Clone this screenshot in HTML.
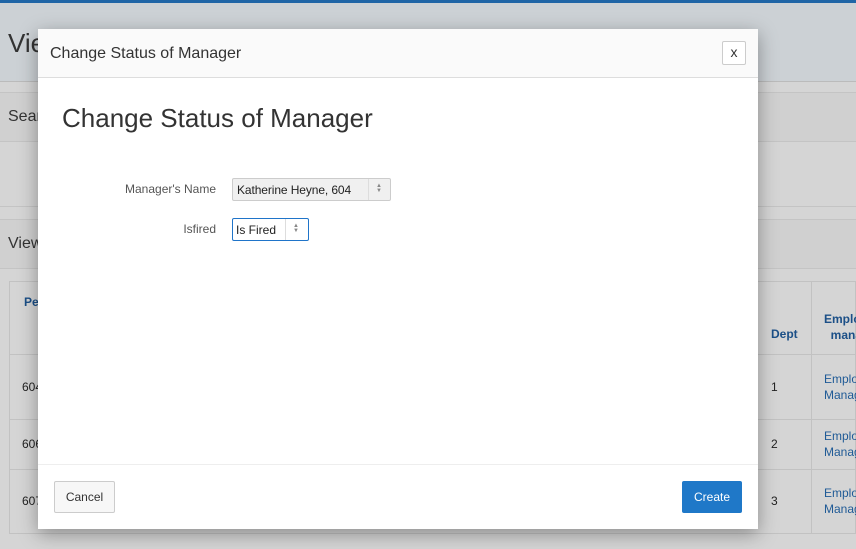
<!DOCTYPE html>
<html><head><style>
*{box-sizing:border-box;margin:0;padding:0}
body{width:856px;height:549px;overflow:hidden;position:relative;background:#d5d5d5;font-family:"Liberation Sans",sans-serif;}
.abs{position:absolute}
.t{color:#1b4f87;font-weight:bold;font-size:12px}
.c{font-size:12px;color:#222}
.l{font-size:12px;color:#1f5a96;line-height:16px}
</style></head><body>
<div class="abs" style="left:0;top:0;width:856px;height:3px;background:#1f65a6"></div>
<div class="abs" style="left:0;top:3px;width:856px;height:79px;background:#ccd1d5;border-bottom:1px solid #bbb"></div>
<div class="abs" style="left:8px;top:28px;font-size:26px;color:#333">View</div>
<div class="abs" style="left:0;top:92px;width:856px;height:50px;background:#d0d0d0;border-top:1px solid #c4c4c4;border-bottom:1px solid #c4c4c4"></div>
<div class="abs" style="left:8px;top:108px;font-size:16px;color:#333">Search</div>
<div class="abs" style="left:0;top:206px;width:856px;height:1px;background:#c4c4c4"></div>
<div class="abs" style="left:0;top:219px;width:856px;height:50px;background:#d0d0d0;border-top:1px solid #c4c4c4;border-bottom:1px solid #c4c4c4"></div>
<div class="abs" style="left:8px;top:235px;font-size:16px;color:#333">View</div>
<div class="abs" style="left:9px;top:281px;width:847px;height:253px;border:1px solid #c2c2c2;background:#d5d5d5"></div>
<div class="abs" style="left:9px;top:354px;width:847px;height:1px;background:#c2c2c2"></div>
<div class="abs" style="left:9px;top:419px;width:847px;height:1px;background:#c2c2c2"></div>
<div class="abs" style="left:9px;top:469px;width:847px;height:1px;background:#c2c2c2"></div>
<div class="abs" style="left:811px;top:281px;width:1px;height:253px;background:#c2c2c2"></div>
<div class="abs t" style="left:24px;top:295px">Person</div>
<div class="abs c" style="left:22px;top:380px">604</div>
<div class="abs c" style="left:22px;top:437px">606</div>
<div class="abs c" style="left:22px;top:494px">607</div>
<div class="abs t" style="left:771px;top:327px">Dept</div>
<div class="abs t" style="left:824px;top:311px;line-height:16px">Employee<br>&nbsp;&nbsp;manager</div>
<div class="abs c" style="left:771px;top:380px">1</div>
<div class="abs c" style="left:771px;top:437px">2</div>
<div class="abs c" style="left:771px;top:494px">3</div>
<div class="abs l" style="left:824px;top:371px">Employee<br>Manager</div>
<div class="abs l" style="left:824px;top:428px">Employee<br>Manager</div>
<div class="abs l" style="left:824px;top:485px">Employee<br>Manager</div>

<div class="abs" style="left:38px;top:29px;width:720px;height:500px;background:#fff;box-shadow:0 5px 18px rgba(0,0,0,.35)">
 <div style="height:49px;background:#fafafa;border-bottom:1px solid #ddd;position:relative">
  <div class="abs" style="left:12px;top:16px;font-size:16px;color:#333">Change Status of Manager</div>
  <div class="abs" style="left:684px;top:12px;width:24px;height:24px;border:1px solid #ccc;background:#fff;border-radius:2px;text-align:center;line-height:21px;font-size:14px;color:#333">x</div>
 </div>
 <div class="abs" style="left:24px;top:74px;font-size:26px;color:#333">Change Status of Manager</div>
 <div class="abs" style="left:0;top:153px;width:178px;text-align:right;font-size:12px;color:#555">Manager's Name</div>
 <div class="abs" style="left:194px;top:149px;width:159px;height:23px;background:#f0f0f0;border:1px solid #ccc;border-radius:2px;font-size:12px;color:#222;padding:4px 0 0 4px;letter-spacing:-0.1px">Katherine Heyne, 604
  <div class="abs" style="left:135px;top:0;width:1px;height:21px;background:#ddd"></div>
  <div class="abs" style="left:143px;top:5px;font-size:6px;color:#888;line-height:5px">▲<br>▼</div></div>
 <div class="abs" style="left:0;top:193px;width:178px;text-align:right;font-size:12px;color:#555">Isfired</div>
 <div class="abs" style="left:194px;top:189px;width:77px;height:23px;background:#fff;border:1px solid #1f74c9;border-radius:2px;font-size:12px;color:#222;padding:4px 0 0 3px">Is Fired
  <div class="abs" style="left:52px;top:0;width:1px;height:21px;background:#ddd"></div>
  <div class="abs" style="left:60px;top:5px;font-size:6px;color:#888;line-height:5px">▲<br>▼</div></div>
 <div class="abs" style="left:0;top:435px;width:720px;height:1px;background:#eee"></div>
 <div class="abs" style="left:16px;top:452px;width:61px;height:32px;border:1px solid #ccc;background:#f7f7f7;border-radius:2px;text-align:center;line-height:30px;font-size:12px;color:#333">Cancel</div>
 <div class="abs" style="left:644px;top:452px;width:60px;height:32px;background:#1f78c8;border-radius:2px;text-align:center;line-height:32px;font-size:12px;color:#fff">Create</div>
</div>
</body></html>
